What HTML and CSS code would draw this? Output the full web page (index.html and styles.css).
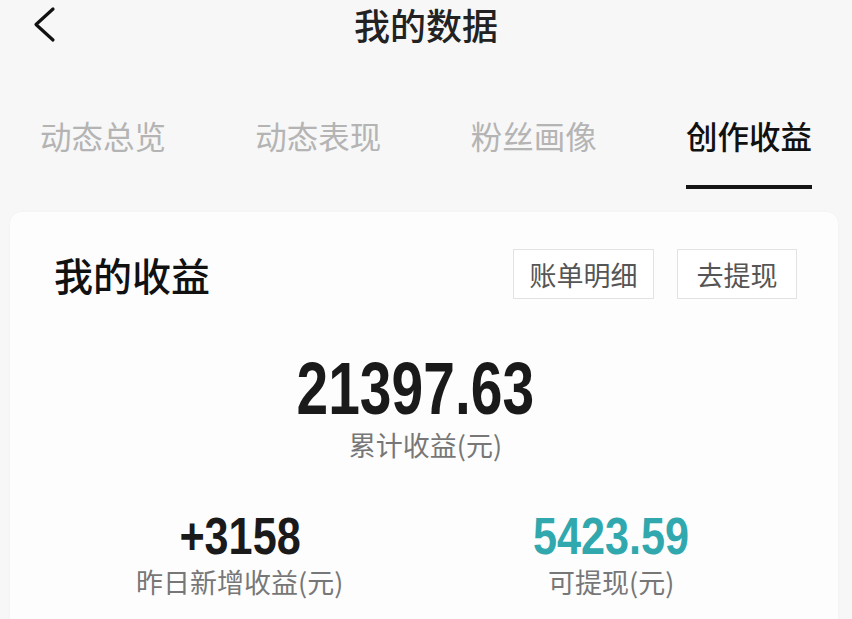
FILE: index.html
```html
<!DOCTYPE html>
<html lang="zh">
<head>
  <meta charset="UTF-8">
  <title>我的数据</title>
  <link rel="stylesheet" href="styles.css">
</head>
<body>
  <!-- 顶部导航 -->
  <header class="nav-bar">
    <svg class="back-icon" width="28" height="40" viewBox="0 0 28 40">
      <path d="M22 4 L5 19.5 L22 35" fill="none" stroke="#111" stroke-width="3.2" stroke-linecap="round" stroke-linejoin="round"/>
    </svg>
    <h1 class="nav-title">我的数据</h1>
  </header>

  <!-- 标签页 -->
  <nav class="tabs">
    <div class="tab">动态总览</div>
    <div class="tab">动态表现</div>
    <div class="tab">粉丝画像</div>
    <div class="tab active">创作收益</div>
  </nav>

  <!-- 收益卡片 -->
  <section class="card">
    <div class="card-head">
      <h2>我的收益</h2>
      <div class="actions">
        <button class="btn btn-bill">账单明细</button>
        <button class="btn btn-cash">去提现</button>
      </div>
    </div>
    <div class="total">
      <div class="total-num"><span>21397.63</span></div>
      <div class="label">累计收益(元)</div>
    </div>
    <div class="stats">
      <div class="stat">
        <div class="stat-num"><span>+3158</span></div>
        <div class="label">昨日新增收益(元)</div>
      </div>
      <div class="stat">
        <div class="stat-num teal"><span>5423.59</span></div>
        <div class="label">可提现(元)</div>
      </div>
    </div>
  </section>
</body>
</html>
```

FILE: styles.css
```css
* {
  margin: 0;
  padding: 0;
  box-sizing: border-box;
}
body {
  width: 852px;
  height: 619px;
  overflow: hidden;
  background: #f7f7f7;
  font-family: "Noto Sans CJK SC", "Noto Sans", sans-serif;
  color: #1c1c1c;
}
/* 顶部导航 */
.nav-bar {
  position: relative;
  height: 52px;
  display: flex;
  justify-content: center;
  align-items: flex-start;
}
.back-icon {
  position: absolute;
  left: 31px;
  top: 5px;
}
.nav-title {
  font-size: 36px;
  font-weight: 500;
  line-height: 44px;
  margin-top: 2px;
  color: #222;
}
/* 标签页 */
.tabs {
  display: flex;
  justify-content: space-between;
  align-items: flex-start;
  padding: 61px 40px 0 40px;
  height: 137px;
}
.tab {
  font-size: 31.5px;
  line-height: 44px;
  color: #b4b4b4;
}
.tab.active {
  color: #111;
  font-weight: 500;
  height: 76px;
  border-bottom: 4px solid #151515;
}
/* 收益卡片 */
.card {
  margin: 23px 14px 0 10px;
  background: #fdfdfd;
  border-radius: 12px;
  box-shadow: 0 0 3px rgba(0,0,0,0.03);
  height: 420px;
  padding: 37px 41px 0 44px;
}
.card-head {
  display: flex;
  justify-content: space-between;
  align-items: center;
}
.card-head h2 {
  font-size: 39px;
  font-weight: 500;
  line-height: 50px;
  color: #111;
}
.actions {
  display: flex;
  gap: 23px;
}
.btn {
  font-family: inherit;
  font-size: 27px;
  color: #555;
  background: #fff;
  border: 1px solid #e3e3e3;
  height: 50px;
  line-height: 1;
}
.btn-bill {
  width: 141px;
}
.btn-cash {
  width: 120px;
}
/* 数字：压窄的粗体 */
.total {
  text-align: center;
  margin-top: 55px;
}
.total-num,
.stat-num {
  font-family: "Liberation Sans", "Arial", sans-serif;
  font-weight: 700;
  color: #1a1a1a;
}
.total-num {
  font-size: 74px;
  line-height: 70px;
  height: 70px;
}
.total-num span {
  display: inline-block;
  transform: translateX(-10px) scaleX(0.77);
}
.label {
  font-size: 27px;
  line-height: 36px;
  color: #777;
}
.total .label {
  margin-top: 3px;
}
.stats {
  display: grid;
  grid-template-columns: 1fr 1fr;
  margin-top: 47px;
  text-align: center;
}
.stat-num {
  font-size: 52px;
  line-height: 52px;
  height: 52px;
}
.stat-num span {
  display: inline-block;
  transform: scaleX(0.83);
}
.stat-num.teal {
  color: #31a8ad;
}
.stat .label {
  margin-top: 2px;
}
```
